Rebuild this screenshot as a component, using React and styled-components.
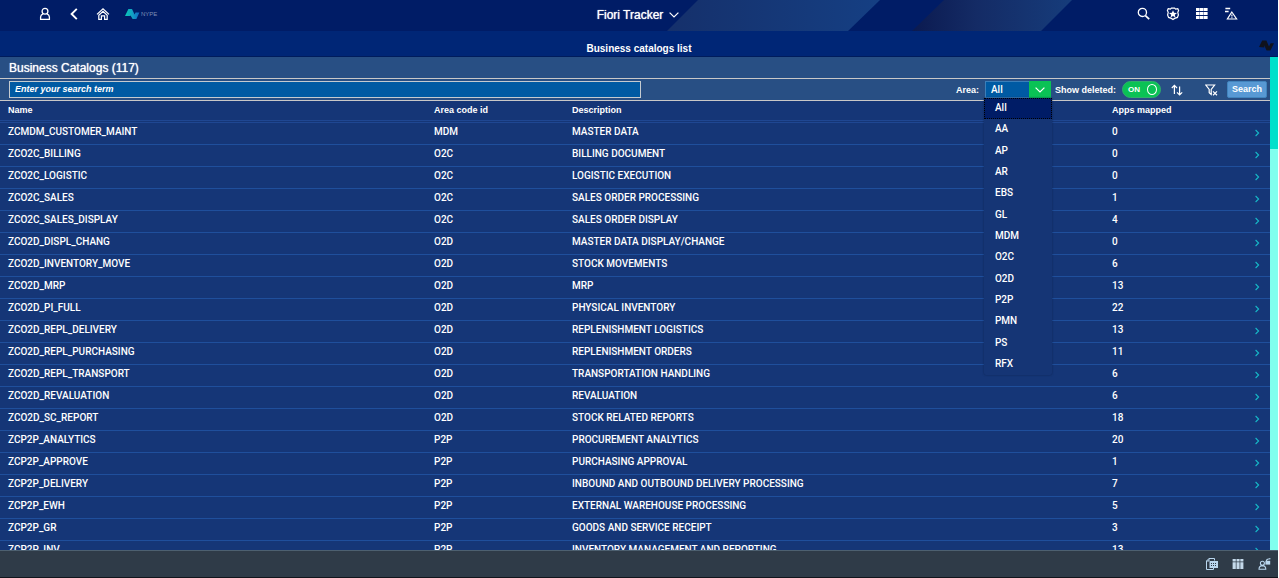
import React, { useState } from 'react';
import styled, { createGlobalStyle } from 'styled-components';

const GlobalStyle = createGlobalStyle`
  *, *::before, *::after { box-sizing: border-box; }
  body {
    margin: 0;
    background: #fff;
    color: #fff;
    font-family: "Liberation Sans", Arial, sans-serif;
    font-size: 9px;
    font-weight: 700;
  }
  button, input, select { font: inherit; color: inherit; }
`;

const Page = styled.div`
  display: flex;
  flex-direction: column;
  height: 100vh;
  margin-right: 1px;
  overflow: hidden;
  background: #153677;
`;

const ShellBar = styled.header`
  position: relative;
  flex: none;
  display: grid;
  grid-template-columns: 1fr auto 1fr;
  align-items: center;
  height: 31px;
  padding: 0 40px 3px 38px;
  background: #001c66;
`;

const ShellStripes = styled.svg`
  position: absolute;
  top: 0;
  left: calc(50% + 26px);
`;

const ShellGroup = styled.div`
  position: relative;
  display: flex;
  align-items: center;
  justify-content: ${(p) => (p.$end ? 'flex-end' : 'flex-start')};
  gap: 15px;
`;

const IconButton = styled.button`
  display: flex;
  padding: 0;
  border: 0;
  background: none;
  color: ${(p) => p.$color || '#fff'};
  cursor: pointer;
`;

const ShellTitle = styled.button`
  position: relative;
  display: flex;
  align-items: center;
  gap: 6px;
  padding: 2px 0 0;
  border: 0;
  background: none;
  font-weight: 400;
  font-size: 12px;
  line-height: 16px;
  text-shadow: 0 0 1px #fff;
`;

const SubHeader = styled.div`
  position: relative;
  flex: none;
  height: 26px;
  padding-top: 5px;
  border-bottom: 1px solid #001c5c;
  background: #002676;
`;

const PageTitle = styled.h1`
  margin: 0;
  font-size: 10px;
  line-height: 26px;
  text-align: center;
`;

const CornerMark = styled.svg`
  position: absolute;
  top: 9px;
  right: 4px;
`;

const Main = styled.main`
  flex: 1;
  display: flex;
  min-height: 0;
`;

const Content = styled.section`
  flex: 1;
  min-width: 0;
  overflow: hidden;
`;

const ListTitle = styled.h2`
  height: 22px;
  margin: 0;
  padding-left: 9px;
  border-bottom: 1px solid #c9c8c8;
  background: #284f84;
  font-size: 12px;
  font-weight: 400;
  line-height: 22px;
  text-shadow: 0 0 1px #fff;
`;

const Toolbar = styled.div`
  display: flex;
  align-items: center;
  justify-content: space-between;
  height: 22px;
  padding: 0 3px 0 9px;
  border-bottom: 1px solid #c9c8c8;
  background: #284f84;
`;

const SearchField = styled.input`
  width: calc(50% + 3px);
  height: 17px;
  padding: 0 5px 1px;
  border: 1px solid #c5cbd0;
  border-radius: 0;
  background: #005aa3;
  outline: none;
  &::placeholder {
    color: #fff;
    font-style: italic;
    opacity: 1;
  }
`;

const Actions = styled.div`
  display: flex;
  align-items: center;
  height: 17px;
`;

const Label = styled.label`
  margin-right: 6px;
  line-height: 16px;
`;

const SelectBox = styled.div`
  position: relative;
  width: 66px;
  height: 17px;
  margin-right: 4px;
  font-family: Roboto, "Liberation Sans", sans-serif;
  font-size: 10px;
  font-weight: 500;
`;

const AreaSelect = styled.select`
  appearance: none;
  display: block;
  width: 100%;
  height: 17px;
  padding: 0 22px 0 5px;
  border: 1px solid #3c7fb9;
  border-right: 0;
  border-radius: 0;
  background: #005aa3;
  outline: none;
`;

const SelectArrow = styled.span`
  position: absolute;
  top: 0;
  right: 0;
  display: flex;
  align-items: center;
  justify-content: center;
  width: 22px;
  height: 17px;
  background: #0ac255;
  pointer-events: none;
`;

const OptionList = styled.ul`
  position: absolute;
  top: 17px;
  left: -1px;
  z-index: 2;
  display: grid;
  grid-auto-rows: 1fr;
  width: 68px;
  height: 277px;
  margin: 0;
  padding: 0;
  border-radius: 0 0 2px 2px;
  background: #153575;
  box-shadow: 0 0 2px #0c2251;
  list-style: none;
`;

const Option = styled.li`
  display: flex;
  align-items: center;
  padding: 0 10px 2px;
  border: 1px dotted ${(p) => (p['aria-selected'] ? '#000' : 'transparent')};
  background: ${(p) => (p['aria-selected'] ? '#001c66' : 'transparent')};
`;

const Switch = styled.label`
  position: relative;
  display: flex;
  align-items: center;
  justify-content: space-between;
  width: 39px;
  height: 17px;
  margin-right: 10px;
  padding: 0 3px 0 5px;
  border: 1px solid #2fae6c;
  border-radius: 9px;
  background: #0ac255;
  font-size: 8px;
`;

const SwitchInput = styled.input`
  position: absolute;
  inset: 0;
  margin: 0;
  opacity: 0;
`;

const Knob = styled.span`
  width: 10px;
  height: 11px;
  border: 1px solid #fff;
  border-radius: 50%;
`;

const ToolIcon = styled(IconButton)`
  margin-right: ${(p) => (p.$last ? '9px' : '22px')};
`;

const SearchButton = styled.button`
  width: 40px;
  height: 17px;
  padding: 0 0 1px;
  border: 1px solid #4184bd;
  border-radius: 2px;
  background: #5899d4;
  text-align: center;
`;

const Table = styled.table`
  width: 100%;
  border-collapse: separate;
  border-spacing: 0;
  table-layout: fixed;
`;

const HeadCell = styled.th`
  width: ${(p) => p.$width || 'auto'};
  height: 22px;
  padding: 0 8px 1px;
  border-bottom: 3px double #1f4792;
  line-height: 15px;
  text-align: left;
  white-space: nowrap;
`;

const Cell = styled.td`
  height: 22px;
  padding: 0 8px 5px;
  border-bottom: 1px solid #1f4f9c;
  font-family: Roboto, "Liberation Sans", sans-serif;
  font-size: 10px;
  font-weight: 500;
  line-height: 15px;
  white-space: nowrap;
`;

const ArrowCell = styled(Cell)`
  padding: 0 10px 1px 0;
`;

const RowLink = styled.button`
  display: block;
  margin-left: auto;
  padding: 0;
  border: 0;
  background: none;
  color: #16b9c8;
  line-height: 0;
`;

const ScrollTrack = styled.div`
  flex: none;
  width: 8px;
  background: #80ffee;
`;

const ScrollThumb = styled.div`
  height: 92px;
  background: #00e0cb;
`;

const Footer = styled.footer`
  flex: none;
  display: flex;
  align-items: center;
  justify-content: flex-end;
  gap: 14px;
  height: 28px;
  padding: 0 7px 0 0;
  border-top: 1px solid #4d6070;
  border-bottom: 1px solid #11151c;
  background: #2f3b48;
`;

const ROWS = [
  ['ZCMDM_CUSTOMER_MAINT', 'MDM', 'MASTER DATA', 0],
  ['ZCO2C_BILLING', 'O2C', 'BILLING DOCUMENT', 0],
  ['ZCO2C_LOGISTIC', 'O2C', 'LOGISTIC EXECUTION', 0],
  ['ZCO2C_SALES', 'O2C', 'SALES ORDER PROCESSING', 1],
  ['ZCO2C_SALES_DISPLAY', 'O2C', 'SALES ORDER DISPLAY', 4],
  ['ZCO2D_DISPL_CHANG', 'O2D', 'MASTER DATA DISPLAY/CHANGE', 0],
  ['ZCO2D_INVENTORY_MOVE', 'O2D', 'STOCK MOVEMENTS', 6],
  ['ZCO2D_MRP', 'O2D', 'MRP', 13],
  ['ZCO2D_PI_FULL', 'O2D', 'PHYSICAL INVENTORY', 22],
  ['ZCO2D_REPL_DELIVERY', 'O2D', 'REPLENISHMENT LOGISTICS', 13],
  ['ZCO2D_REPL_PURCHASING', 'O2D', 'REPLENISHMENT ORDERS', 11],
  ['ZCO2D_REPL_TRANSPORT', 'O2D', 'TRANSPORTATION HANDLING', 6],
  ['ZCO2D_REVALUATION', 'O2D', 'REVALUATION', 6],
  ['ZCO2D_SC_REPORT', 'O2D', 'STOCK RELATED REPORTS', 18],
  ['ZCP2P_ANALYTICS', 'P2P', 'PROCUREMENT ANALYTICS', 20],
  ['ZCP2P_APPROVE', 'P2P', 'PURCHASING APPROVAL', 1],
  ['ZCP2P_DELIVERY', 'P2P', 'INBOUND AND OUTBOUND DELIVERY PROCESSING', 7],
  ['ZCP2P_EWH', 'P2P', 'EXTERNAL WAREHOUSE PROCESSING', 5],
  ['ZCP2P_GR', 'P2P', 'GOODS AND SERVICE RECEIPT', 3],
  ['ZCP2P_INV', 'P2P', 'INVENTORY MANAGEMENT AND REPORTING', 13],
];

const AREAS = ['All', 'AA', 'AP', 'AR', 'EBS', 'GL', 'MDM', 'O2C', 'O2D', 'P2P', 'PMN', 'PS', 'RFX'];

const Icon = ({ w = 14, h = 14, sw = 1.3, children }) => (
  <svg width={w} height={h} viewBox={`0 0 ${w} ${h}`} fill="none" stroke="currentColor" strokeWidth={sw} aria-hidden="true">
    {children}
  </svg>
);

const PersonIcon = () => (
  <Icon>
    <circle cx="7" cy="4.2" r="2.9" />
    <path d="M5 6.8 Q2.7 7.8 2.6 10 V12.4 H11.4 V10 Q11.3 7.8 9 6.8" />
  </Icon>
);
const BackIcon = () => (
  <Icon sw={1.9}><path d="M9.8 1.8 L4.6 7 L9.8 12.2" /></Icon>
);
const HomeIcon = () => (
  <Icon sw={1.2}>
    <path d="M1 7.4 L7 1.8 L13 7.4" />
    <path d="M2.8 8.2 L7 4.3 L11.2 8.2 V12.4 H8.6 V8.8 H5.4 V12.4 H2.8 Z" />
  </Icon>
);
const SearchIcon = () => (
  <Icon>
    <circle cx="5.4" cy="5.4" r="4.1" />
    <path d="M8.4 8.6 L12.2 12.2" strokeWidth="1.7" />
  </Icon>
);
const BadgeIcon = () => (
  <Icon sw={1.2}>
    <path d="M2.2 1.6 L4.4 2.2 L5.4 1.2 H8.6 L9.6 2.2 L11.8 1.6 L12.6 3.4 L11.8 5.4 L12.4 8 L11.4 10.4 L8.6 11.4 L7 12.6 L5.4 11.4 L2.6 10.4 L1.6 8 L2.2 5.4 L1.4 3.4 Z" />
    <path d="M7 3.2 L8.1 5.8 L11 6 L8.8 7.8 L9.5 10.6 L7 9 L4.5 10.6 L5.2 7.8 L3 6 L5.9 5.8 Z" fill="currentColor" stroke="none" />
  </Icon>
);
const GridIcon = () => (
  <Icon>
    <g fill="currentColor" stroke="none">
      {[1, 5, 9].map((y) => [1, 5, 9].map((x) => <rect key={`${x}-${y}`} x={x} y={y} width="3.6" height="3" />))}
    </g>
  </Icon>
);
const AlertListIcon = () => (
  <Icon sw={1.2}>
    <path d="M1.4 1.6 H6.2 M1 4.4 H4.6" strokeWidth="1.5" />
    <path d="M7.8 5 L12.6 12 H3.4 Z" />
    <path d="M7.9 7.4 V9.4 M7.9 10.2 V11.2" />
  </Icon>
);
const BrandLogo = () => (
  <svg width="34" height="12" viewBox="0 0 34 12" role="img" aria-label="NYPE">
    <defs>
      <linearGradient id="brand" x1="0" x2="1">
        <stop offset="0" stopColor="#08c9b5" />
        <stop offset="0.5" stopColor="#12a0c4" />
        <stop offset="1" stopColor="#1267c4" />
      </linearGradient>
    </defs>
    <path d="M0 8 L3.4 1 H7 L9.6 6.6 L10.6 4.4 H14.4 L11.4 11 H7.6 L5.6 7.4 L5 8 Z" fill="url(#brand)" />
    <text x="16" y="8" fontSize="6" fontWeight="400" fill="#7f8fb5">NYPE</text>
  </svg>
);

const SortIcon = () => (
  <Icon w={12} h={12} sw={1.2}>
    <path d="M3.4 10 V1.6 M0.8 4 L3.4 1.4 L6 4 M8.6 2.6 V11 M6 8.4 L8.6 11 L11.2 8.4" />
  </Icon>
);
const ClearFilterIcon = () => (
  <Icon w={13} h={12} sw={1.2}>
    <path d="M0.8 1 H9.6 L6.2 5.4 V10.4 L4.2 8.8 V5.4 Z" />
    <path d="M8 7.4 L12 11.2 M12 7.4 L8 11.2" />
  </Icon>
);
const DownIcon = () => (
  <svg width="10" height="6" viewBox="0 0 10 6" fill="none" stroke="#fff" strokeWidth="1.2" aria-hidden="true">
    <path d="M0.6 0.6 L5 5 L9.4 0.6" />
  </svg>
);
const RightIcon = () => (
  <Icon w={6} h={8} sw={1.1}><path d="M1.6 1 L4.6 4 L1.6 7" /></Icon>
);

const SheetIcon = () => (
  <Icon w={13} h={12} sw={1}>
    <path d="M9.5 2.5 V0.5 H4 L1.5 3 V11.5 H8.5 V10" />
    <path d="M4 0.5 V3 H1.5" />
    <rect x="4.5" y="3" width="8.5" height="7" fill="currentColor" stroke="none" />
    <path d="M6 5.5 H12 M6 7.5 H12" stroke="#2f3b48" strokeDasharray="1 1" />
  </Icon>
);
const ColumnsIcon = () => (
  <Icon w={12} h={12}>
    <g fill="currentColor" stroke="none">
      <path d="M0.6 1 H3.8 V3.4 H0.6 Z M4.5 1 H7.6 V3.4 H4.5 Z M8.3 1 H11.4 V3.4 H8.3 Z M0.6 4.2 H3.8 V11 H0.6 Z M4.5 4.2 H7.6 V11 H4.5 Z M8.3 4.2 H11.4 V11 H8.3 Z" />
    </g>
  </Icon>
);
const UserLockIcon = () => (
  <Icon w={13} h={12} sw={1.1}>
    <circle cx="4.4" cy="5.2" r="2" />
    <path d="M1 11.2 Q1 7.8 4.4 7.6 Q7.8 7.8 7.8 11.2 Z" />
    <rect x="7.4" y="2.8" width="4.8" height="3.8" fill="currentColor" stroke="none" />
    <path d="M8.4 3 Q8.6 1 10.4 1 L12.4 0.6" />
  </Icon>
);

export default function App() {
  const [area, setArea] = useState('All');
  const [deleted, setDeleted] = useState(true);

  return (
    <>
      <GlobalStyle />
      <Page>
        <ShellBar>
          <ShellStripes width="410" height="31" viewBox="0 0 410 31" aria-hidden="true">
            <defs>
              <linearGradient id="stripeA" x1="0" x2="1">
                <stop offset="0" stopColor="#15306b" />
                <stop offset="1" stopColor="#153f83" />
              </linearGradient>
              <linearGradient id="stripeB" x1="0" x2="1">
                <stop offset="0" stopColor="#0b1a50" />
                <stop offset="0.4" stopColor="#142b65" />
                <stop offset="1" stopColor="#163c7b" />
              </linearGradient>
            </defs>
            <path d="M33 0 H215 L183 31 H2 Z" fill="url(#stripeA)" />
            <path d="M279 0 H407 L376 31 H247 Z" fill="url(#stripeB)" />
          </ShellStripes>
          <ShellGroup>
            <IconButton aria-label="User"><PersonIcon /></IconButton>
            <IconButton aria-label="Back"><BackIcon /></IconButton>
            <IconButton aria-label="Home"><HomeIcon /></IconButton>
            <BrandLogo />
          </ShellGroup>
          <ShellTitle>Fiori Tracker <DownIcon /></ShellTitle>
          <ShellGroup $end>
            <IconButton aria-label="Search"><SearchIcon /></IconButton>
            <IconButton aria-label="Favourites"><BadgeIcon /></IconButton>
            <IconButton aria-label="Apps"><GridIcon /></IconButton>
            <IconButton aria-label="Notifications"><AlertListIcon /></IconButton>
          </ShellGroup>
        </ShellBar>

        <SubHeader>
          <PageTitle>Business catalogs list</PageTitle>
          <CornerMark width="15" height="11" viewBox="0 0 15 11" aria-hidden="true">
            <path d="M0 7 L3.2 0.6 H7.4 L10 6.6 L11.6 3.2 H15 L11.4 10.4 H7.6 L5.2 5.2 V7.4 Z" fill="#10121c" />
          </CornerMark>
        </SubHeader>

        <Main>
          <Content>
            <ListTitle>Business Catalogs (117)</ListTitle>
            <Toolbar>
              <SearchField type="search" aria-label="Search catalogs" placeholder="Enter your search term" />
              <Actions>
                <Label htmlFor="area">Area:</Label>
                <SelectBox>
                  <AreaSelect id="area" value={area} onChange={(e) => setArea(e.target.value)}>
                    {AREAS.map((a) => <option key={a}>{a}</option>)}
                  </AreaSelect>
                  <SelectArrow><DownIcon /></SelectArrow>
                  <OptionList role="listbox" aria-label="Area">
                    {AREAS.map((a) => (
                      <Option key={a} role="option" aria-selected={a === area} onClick={() => setArea(a)}>{a}</Option>
                    ))}
                  </OptionList>
                </SelectBox>
                <Label htmlFor="deleted">Show deleted:</Label>
                <Switch>
                  <SwitchInput id="deleted" type="checkbox" role="switch" checked={deleted} onChange={(e) => setDeleted(e.target.checked)} />
                  {deleted ? 'ON' : 'OFF'}
                  <Knob />
                </Switch>
                <ToolIcon aria-label="Sort"><SortIcon /></ToolIcon>
                <ToolIcon $last aria-label="Clear filter"><ClearFilterIcon /></ToolIcon>
                <SearchButton>Search</SearchButton>
              </Actions>
            </Toolbar>
            <Table>
              <thead>
                <tr>
                  <HeadCell $width="426px">Name</HeadCell>
                  <HeadCell $width="138px">Area code id</HeadCell>
                  <HeadCell>Description</HeadCell>
                  <HeadCell $width="136px">Apps mapped</HeadCell>
                  <HeadCell $width="30px" aria-label="Details" />
                </tr>
              </thead>
              <tbody>
                {ROWS.map(([name, code, description, apps]) => (
                  <tr key={name}>
                    <Cell>{name}</Cell>
                    <Cell>{code}</Cell>
                    <Cell>{description}</Cell>
                    <Cell>{apps}</Cell>
                    <ArrowCell><RowLink aria-label={`Open ${name}`}><RightIcon /></RowLink></ArrowCell>
                  </tr>
                ))}
              </tbody>
            </Table>
          </Content>
          <ScrollTrack><ScrollThumb /></ScrollTrack>
        </Main>

        <Footer>
          <IconButton $color="#b9d6ee" aria-label="Export"><SheetIcon /></IconButton>
          <IconButton $color="#c4d9ea" aria-label="Columns"><ColumnsIcon /></IconButton>
          <IconButton $color="#b9d6ee" aria-label="User settings"><UserLockIcon /></IconButton>
        </Footer>
      </Page>
    </>
  );
}
